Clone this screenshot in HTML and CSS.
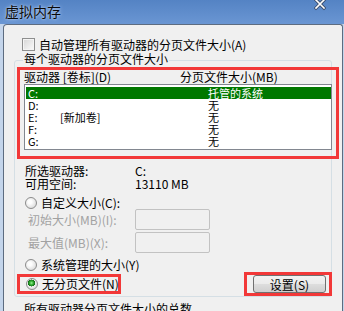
FILE: index.html
```html
<!DOCTYPE html>
<html lang="zh-CN">
<head>
  <meta charset="UTF-8" />
  <title>虚拟内存</title>
  <link rel="stylesheet" href="styles.css">
</head>
<body>
  <header class="titlebar">
    <span class="title">虚拟内存</span>
    <svg class="close" width="12" height="11" viewBox="0 0 12 11">
      <path d="M2 0 L10 8 M10 0 L2 8" stroke="#3a4a66" stroke-width="3.2" stroke-linecap="square" />
      <path d="M2 0 L10 8 M10 0 L2 8" stroke="#fff" stroke-width="1.6" stroke-linecap="square" />
    </svg>
  </header>

  <main class="window">
    <div class="auto">
      <span class="checkbox"></span>
      <span>自动管理所有驱动器的分页文件大小(A)</span>
    </div>

    <section class="group">
      <div class="group-title">每个驱动器的分页文件大小</div>

      <div class="mark mark-list">
        <div class="list-head">
          <span class="col-drive">驱动器 [卷标](D)</span>
          <span>分页文件大小(MB)</span>
        </div>
        <div class="listbox">
          <div class="row selected"><span class="c1">C:</span><span class="c2"></span><span>托管的系统</span></div>
          <div class="row"><span class="c1">D:</span><span class="c2"></span><span>无</span></div>
          <div class="row"><span class="c1">E:</span><span class="c2">[新加卷]</span><span>无</span></div>
          <div class="row"><span class="c1">F:</span><span class="c2"></span><span>无</span></div>
          <div class="row"><span class="c1">G:</span><span class="c2"></span><span>无</span></div>
        </div>
      </div>

      <div class="info first"><span class="info-label">所选驱动器:</span><span>C:</span></div>
      <div class="info"><span class="info-label">可用空间:</span><span>13110 MB</span></div>

      <div class="option custom">
        <span class="radio"></span>
        <span>自定义大小(C):</span>
      </div>
      <div class="field">
        <span class="field-label">初始大小(MB)(I):</span>
        <span class="input"></span>
      </div>
      <div class="field second">
        <span class="field-label">最大值(MB)(X):</span>
        <span class="input"></span>
      </div>

      <div class="option managed">
        <span class="radio"></span>
        <span>系统管理的大小(Y)</span>
      </div>

      <div class="bottom-row">
        <div class="mark mark-radio">
          <span class="radio checked"></span>
          <span>无分页文件(N)</span>
        </div>
        <div class="mark mark-btn">
          <button class="btn">设置(S)</button>
        </div>
      </div>
    </section>

    <div class="total-title">所有驱动器分页文件大小的总数</div>
  </main>
</body>
</html>
```

FILE: styles.css
```css
* {
  box-sizing: border-box;
}

html, body {
  margin: 0;
  padding: 0;
}

body {
  width: 344px;
  height: 311px;
  overflow: hidden;
  background: #c4d5eb;
  font-family: "Noto Sans CJK SC", sans-serif;
  font-size: 12px;
  color: #000;
}

.titlebar {
  position: relative;
  height: 24px;
  background: linear-gradient(#5483c4, #6a96d3);
}

.title {
  display: block;
  padding-left: 5px;
  line-height: 22px;
  font-size: 14px;
  color: #0a0a0a;
  text-shadow: 0 0 4px #aac6ee, 0 0 2px #c4d8f4;
}

.close {
  position: absolute;
  left: 314px;
  top: 0;
}

.window {
  width: 340px;
  height: 287px;
  margin-left: 3px;
  padding-top: 13px;
  background: #f0f0f0;
  border-top: 1px solid #5d6c80;
  border-left: 1px solid #5d6c80;
  border-right: 1px solid #5d6c80;
  border-top-left-radius: 4px;
  border-top-right-radius: 3px;
}

.auto {
  display: flex;
  align-items: center;
  height: 13px;
  margin-left: 18px;
  gap: 4px;
  line-height: 13px;
}

.checkbox {
  width: 13px;
  height: 13px;
  border: 1px solid #8e8f8f;
  background: linear-gradient(135deg, #d6d6d6, #fbfbfb);
  box-shadow: inset 0 0 0 1px #f4f4f4;
}

.group {
  margin: 9px 10px 0 10px;
  border: 1px solid #d5dfe5;
  border-radius: 3px;
}

.group-title {
  width: fit-content;
  margin: -9px 0 0 8px;
  padding: 0 1px;
  line-height: 14px;
  height: 14px;
  background: #f0f0f0;
}

.mark {
  border: 3px solid #f23838;
}

.mark-list {
  margin: 1px -8px 0 2px;
  padding: 0 4px 6px 4px;
}

.list-head {
  display: flex;
  height: 14px;
  line-height: 13px;
}

.col-drive {
  width: 156px;
}

.listbox {
  height: 66px;
  padding: 2px 0 0 1px;
  border: 1px solid #828790;
  background: #fff;
}

.row {
  display: flex;
  height: 12px;
  line-height: 12px;
  padding-left: 2px;
  font-size: 11px;
  white-space: nowrap;
}

.row.selected {
  background: #007800;
  color: #fff;
}

.c1 {
  width: 32px;
}

.c2 {
  width: 148px;
}

.info {
  display: flex;
  height: 13px;
  line-height: 13px;
  margin-left: 10px;
}

.info.first {
  margin-top: 5px;
}

.info-label {
  width: 110px;
}

.option {
  display: flex;
  align-items: center;
  gap: 4px;
  height: 12px;
  line-height: 12px;
  margin-left: 10px;
}

.option.custom {
  margin-top: 7px;
}

.option.managed {
  margin-top: 6px;
}

.radio {
  flex: none;
  width: 12px;
  height: 12px;
  border-radius: 50%;
  border: 1px solid #8b8b8b;
  background: radial-gradient(circle at 40% 40%, #fdfdfd 20%, #d4d4d4 90%);
}

.radio.checked {
  background:
    radial-gradient(circle at 45% 40%, #9ef09a 0, #3cb83a 1.6px, #0f6e14 3.4px, transparent 3.6px),
    radial-gradient(circle at 40% 40%, #fdfdfd 20%, #d4d4d4 90%);
}

.field {
  display: flex;
  align-items: center;
  height: 21px;
  padding-left: 13px;
  color: #a2a2a2;
}

.field.second {
  margin-top: 2px;
}

.field-label {
  width: 107px;
}

.input {
  width: 75px;
  height: 21px;
  border: 1px solid #c2c2c2;
  border-radius: 2px;
  background: #f0f0f0;
}

.bottom-row {
  display: flex;
  align-items: center;
  margin-top: 1px;
}

.mark-radio {
  display: flex;
  align-items: center;
  gap: 4px;
  width: 104px;
  height: 20px;
  margin-left: 2px;
  padding-left: 6px;
  line-height: 12px;
  white-space: nowrap;
}

.mark-btn {
  margin-left: auto;
  margin-right: -1px;
  height: 24px;
  padding: 0 3px 0 6px;
}

.btn {
  display: block;
  width: 73px;
  height: 18px;
  padding: 0;
  border: 1px solid #707070;
  border-radius: 3px;
  background: linear-gradient(#f2f2f2 0%, #ebebeb 48%, #dddddd 52%, #cfcfcf 100%);
  font-family: "Noto Sans CJK SC", sans-serif;
  font-size: 12px;
  line-height: 15px;
  color: #000;
}

.total-title {
  margin: 5px 0 0 20px;
  line-height: 14px;
}
```
